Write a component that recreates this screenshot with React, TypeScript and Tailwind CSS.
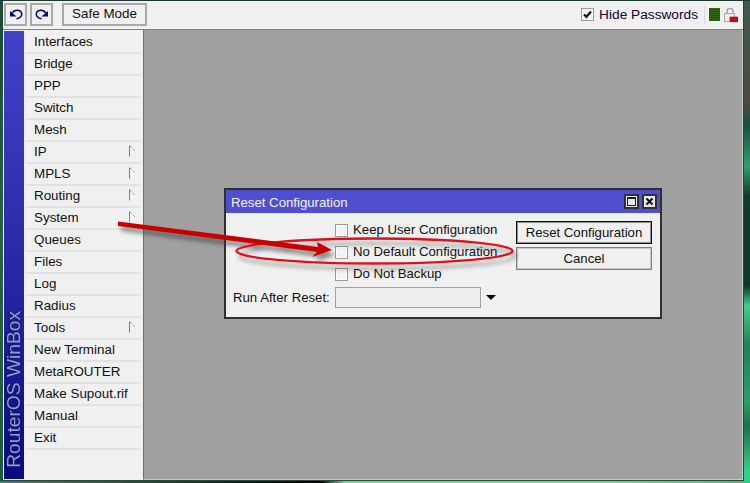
const items: [string, boolean][] = [
  ["Interfaces", false], ["Bridge", false], ["PPP", false], ["Switch", false], ["Mesh", false],
  ["IP", true], ["MPLS", true], ["Routing", true], ["System", true], ["Queues", false],
  ["Files", false], ["Log", false], ["Radius", false], ["Tools", true], ["New Terminal", false],
  ["MetaROUTER", false], ["Make Supout.rif", false], ["Manual", false], ["Exit", false],
];

function Undo({ flip }: { flip?: boolean }) {
  return (
    <svg width="14" height="11" viewBox="0 0 14 11" className={flip ? "-scale-x-100" : ""}>
      <path d="M1 2 L1 7.5 L7.5 7.5 Z" fill="#000070" />
      <path d="M3.5 4 C5 0.5 11 0.2 12.5 3.8 C13.5 6.8 11 9.6 7.5 9.8" fill="none" stroke="#000080" strokeWidth="1.5" />
    </svg>
  );
}

function Box({ checked }: { checked?: boolean }) {
  return (
    <span className="flex h-[13px] w-[13px] shrink-0 items-center justify-center border border-[#9a9a9a] bg-[#f2f2f2] shadow-[inset_0_0_0_1px_#ffffff]">
      {checked && (
        <svg width="9" height="9" viewBox="0 0 9 9">
          <path d="M1 4.5 L3.4 7 L8 1.5" fill="none" stroke="#000" strokeWidth="2" />
        </svg>
      )}
    </span>
  );
}

function CheckRow({ label }: { label: string }) {
  return (
    <div className="flex h-[22px] items-center pl-[109px]">
      <Box />
      <span className="ml-[5px]">{label}</span>
    </div>
  );
}

export default function App() {
  return (
    <div className="relative flex h-[483px] w-[750px] flex-col overflow-hidden bg-[#16382c] font-['Liberation_Sans',sans-serif] text-[13.4px] text-[#101010]">
      <div className="h-px shrink-0 bg-[#1c3a30]" />
      <div className="flex min-h-0 flex-1">
        <div className="w-[3px] shrink-0 bg-[linear-gradient(#1c4a38,#2a6048_50%,#1c5a40)]" />
        {/* window */}
        <div className="flex min-w-0 flex-1 flex-col border-b border-r border-[#33443c]">
          {/* toolbar */}
          <div className="flex h-[29px] shrink-0 items-center border-b border-[#808080] bg-[#f0f0f0] pb-px pl-px pr-[5px]">
            <button className="flex h-[23px] w-[23px] items-center justify-center border-2 border-[#a8a8a8] bg-[#f0f0f0]">
              <Undo />
            </button>
            <button className="ml-[3px] flex h-[23px] w-[23px] items-center justify-center border-2 border-[#a8a8a8] bg-[#f0f0f0]">
              <Undo flip />
            </button>
            <button className="ml-[9px] flex h-[23px] w-[85px] items-center justify-center border-2 border-[#a8a8a8] bg-[#f0f0f0]">
              Safe Mode
            </button>
            <div className="ml-auto flex items-center pt-px">
              <Box checked />
              <span className="ml-[5px] text-[13.7px] text-[#100030]">Hide Passwords</span>
              <span className="ml-[6px] h-[18px] w-px bg-[#d8d8d8]" />
              <span className="ml-[4px] h-[13px] w-[11px] bg-[repeating-linear-gradient(#2f6a10_0_1px,#1f5208_1px_2px)]" />
              <svg className="ml-[4px]" width="14" height="15" viewBox="0 0 14 15">
                <path d="M3 7 V4 C3 0.5 9 0.5 9 4 V7" fill="none" stroke="#a0a0a0" strokeWidth="1.4" />
                <rect x="0.5" y="6.5" width="10" height="8" fill="#eee" stroke="#a8a8a8" />
                <rect x="6" y="10" width="8" height="5" fill="#e00010" stroke="#801010" strokeWidth="0.6" />
              </svg>
            </div>
          </div>

          {/* main */}
          <div className="flex min-h-0 flex-1 bg-[#f0f0f0] pl-px">
            <div className="my-px flex w-[20px] shrink-0 items-end justify-center overflow-hidden bg-[linear-gradient(#4242c8,#2a2aa8_50%,#0a0a80)]">
              <span className="mb-[11px] rotate-180 text-[19.2px] leading-[20px] text-[#8f9fc8] drop-shadow-[1px_0_1px_#101050] [writing-mode:vertical-rl]">
                RouterOS WinBox
              </span>
            </div>
            <div className="w-[119px] shrink-0 px-[2px] pt-[2px]">
              {items.map(([name, sub]) => (
                <div key={name} className="relative flex h-[22px] items-center border-b-2 border-[#e2e2e2] pl-[8px] leading-[20px]">
                  {name}
                  {sub && (
                    <svg className="absolute right-[5px] top-[3px]" width="7" height="12" viewBox="0 0 7 12">
                      <path d="M1 1 L6 6 L1 11 Z" fill="#fafafa" />
                      <path d="M0.5 0.5 V11.5" stroke="#808080" strokeWidth="1.2" />
                      <path d="M1 1 L6 6" stroke="#888888" strokeDasharray="1.2 0.8" />
                    </svg>
                  )}
                </div>
              ))}
            </div>
            <div className="flex-1 border-b border-l border-r border-b-[#c8c8c8] border-l-[#707070] border-r-[#c8c8c8] bg-[#a0a0a0]" />
          </div>
        </div>
        <div className="w-[6px] shrink-0 bg-[linear-gradient(#3f5a50,#4a4a3c_100px,#1a5040_125px,#30a070_165px,#123a2a_195px,#103828_285px,#40d088_305px,#208058_345px,#28a068_400px,#20704a_425px,#30d088_470px)]" />
      </div>
      <div className="h-[2px] shrink-0 bg-[linear-gradient(90deg,#2a8a58,#123a2a_200px,#000_320px,#50e890_345px,#50e890_600px,#30c878)]" />

      {/* dialog */}
      <div className="absolute left-[224px] top-[188px] h-[131px] w-[438px] border-2 border-[#303030] bg-[#f0f0f0] text-[13.2px]">
        <div className="flex h-[23px] items-center bg-[#4f50cf] pl-[5px] pr-[3px] text-[#f4f4f4]">
          <span className="mt-[3px]">Reset Configuration</span>
          <span className="ml-auto flex h-[15px] w-[15px] items-center justify-center border-2 border-[#303030] bg-[#e8e8e8]">
            <span className="h-[9px] w-[9px] border border-t-2 border-[#202020]" />
          </span>
          <span className="ml-[3px] flex h-[15px] w-[15px] items-center justify-center border-2 border-[#303030] bg-[#e8e8e8]">
            <svg width="9" height="9" viewBox="0 0 9 9">
              <path d="M1.5 1.5 L7.5 7.5 M7.5 1.5 L1.5 7.5" stroke="#101010" strokeWidth="2" />
            </svg>
          </span>
        </div>
        <div className="flex">
          <div className="w-[290px] pt-[6px]">
            <CheckRow label="Keep User Configuration" />
            <CheckRow label="No Default Configuration" />
            <CheckRow label="Do Not Backup" />
            <div className="mt-[2px] flex h-[21px] items-center pl-[7px]">
              <span className="w-[102px] whitespace-nowrap">Run After Reset:</span>
              <span className="h-[21px] w-[146px] border border-[#a0a0a0] bg-[#efefef]" />
              <span className="ml-[5px] h-0 w-0 border-x-[5px] border-t-[5px] border-x-transparent border-t-black" />
            </div>
          </div>
          <div className="pt-[8px]">
            <button className="h-[23px] w-[136px] border border-[#101010] bg-[#f0f0f0] pt-px shadow-[inset_0_0_0_1px_#909090]">Reset Configuration</button>
            <button className="mt-[3px] block h-[23px] w-[136px] border border-[#808080] bg-[#f0f0f0] pt-px shadow-[inset_0_0_0_1px_#c8c8c8]">Cancel</button>
          </div>
        </div>
      </div>

      {/* annotations drawn over the screenshot */}
      <svg className="pointer-events-none absolute left-0 top-0" width="750" height="483" viewBox="0 0 750 483">
        <defs>
          <filter id="soft" x="-10%" y="-50%" width="120%" height="200%">
            <feGaussianBlur stdDeviation="2" />
          </filter>
        </defs>
        <g transform="translate(3 5)" filter="url(#soft)" opacity="0.55">
          <ellipse cx="374.5" cy="251" rx="138" ry="12.5" fill="none" stroke="#303030" strokeWidth="2" />
          <path d="M118 221.5 L318 247 L317 242 L332 250 L312 257 L317 252 L118 226 Z" fill="#303030" />
        </g>
        <ellipse cx="374.5" cy="251" rx="138" ry="12.5" fill="none" stroke="#e01018" strokeWidth="2.4" />
        <path d="M118 221.5 L318 247 L317 242 L332 250 L312 257 L317 252 L118 226 Z" fill="#c80000" />
      </svg>
    </div>
  );
}
